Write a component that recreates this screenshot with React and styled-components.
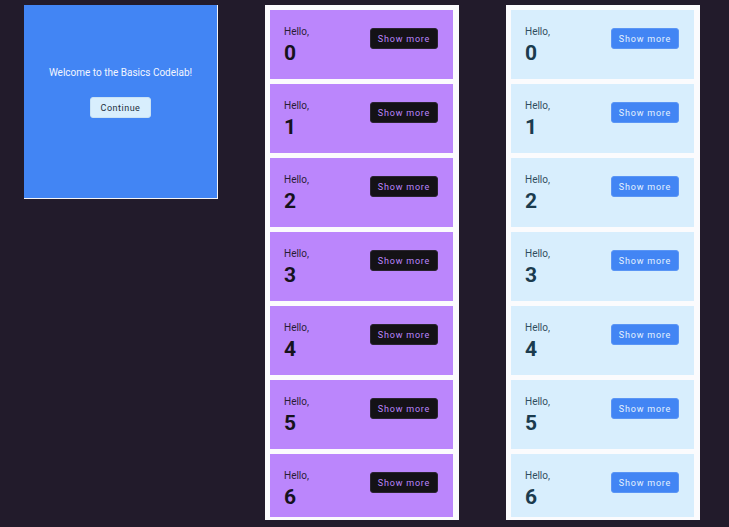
import React from "react";
import styled, { createGlobalStyle } from "styled-components";

const Global = createGlobalStyle`
  html, body { margin: 0; padding: 0; background: #221b2b; }
  body { font-family: Roboto, "Noto Sans", sans-serif; }
  * { box-sizing: border-box; }
`;

const Page = styled.div`
  display: flex;
  align-items: flex-start;
  gap: 47px;
  padding: 5px 0 0 24px;
  width: 729px;
  height: 527px;
  overflow: hidden;
`;

const Onboarding = styled.div`
  width: 194px;
  height: 194px;
  background: #4285f4;
  border-right: 1px solid #f4f4f6;
  border-bottom: 1px solid #f4f4f6;
  display: flex;
  flex-direction: column;
  align-items: center;
  padding-top: 61px;
  gap: 17px;
`;

const Welcome = styled.div`
  font-size: 10px;
  line-height: 14px;
  color: #f2f6ff;
`;

const Button = styled.button`
  height: 21px;
  padding: 0 ${(p) => p.$px}px;
  border-radius: 3px;
  font-family: Roboto, sans-serif;
  font-size: 9px;
  font-weight: 400;
  letter-spacing: ${(p) => p.$ls}px;
  background: ${(p) => p.$bg};
  color: ${(p) => p.$fg};
  border: 1px solid ${(p) => p.$bd};
  cursor: pointer;
  flex-shrink: 0;
`;

const Frame = styled.div`
  width: 194px;
  height: 515px;
  background: #fbfbfd;
  padding: 5px 6px 3px 5px;
`;

const List = styled.div`
  height: 100%;
  overflow: hidden;
  display: flex;
  flex-direction: column;
  gap: 5px;
`;

const Card = styled.div`
  flex-shrink: 0;
  height: 69px;
  background: ${(p) => p.$bg};
  display: flex;
  align-items: flex-start;
  justify-content: space-between;
  padding: 15px 15px 0 14px;
`;

const TextCol = styled.div`
  display: flex;
  flex-direction: column;
  color: ${(p) => p.$fg};
`;

const Hello = styled.div`
  font-size: 10px;
  line-height: 14px;
  opacity: 0.9;
`;

const Num = styled.div`
  margin-top: 2px;
  font-size: 21px;
  line-height: 24px;
  font-weight: 700;
`;

const CardButton = styled(Button)`
  margin-top: 3px;
  width: 68px;
  padding: 0;
`;

const themes = {
  purple: { card: "#bb86fc", fg: "#16121c", btnBg: "#141216", btnFg: "#bb86fc", btnBd: "#2a2330" },
  light: { card: "#d8eefd", fg: "#1b3b4e", btnBg: "#4285f4", btnFg: "#e4f2fe", btnBd: "#5a95f5" },
};

function Greetings({ theme }) {
  const t = themes[theme];
  return (
    <Frame>
      <List>
        {[0, 1, 2, 3, 4, 5, 6].map((n) => (
          <Card key={n} $bg={t.card}>
            <TextCol $fg={t.fg}>
              <Hello>Hello,</Hello>
              <Num>{n}</Num>
            </TextCol>
            <CardButton $bg={t.btnBg} $fg={t.btnFg} $bd={t.btnBd} $ls={0.8}>
              Show more
            </CardButton>
          </Card>
        ))}
      </List>
    </Frame>
  );
}

export default function App() {
  return (
    <>
      <Global />
      <Page>
        <Onboarding>
          <Welcome>Welcome to the Basics Codelab!</Welcome>
          <Button $px={10} $bg="#d8eefd" $fg="#1b2f3c" $bd="#c9e2f5" $ls={0.5}>
            Continue
          </Button>
        </Onboarding>
        <Greetings theme="purple" />
        <Greetings theme="light" />
      </Page>
    </>
  );
}
